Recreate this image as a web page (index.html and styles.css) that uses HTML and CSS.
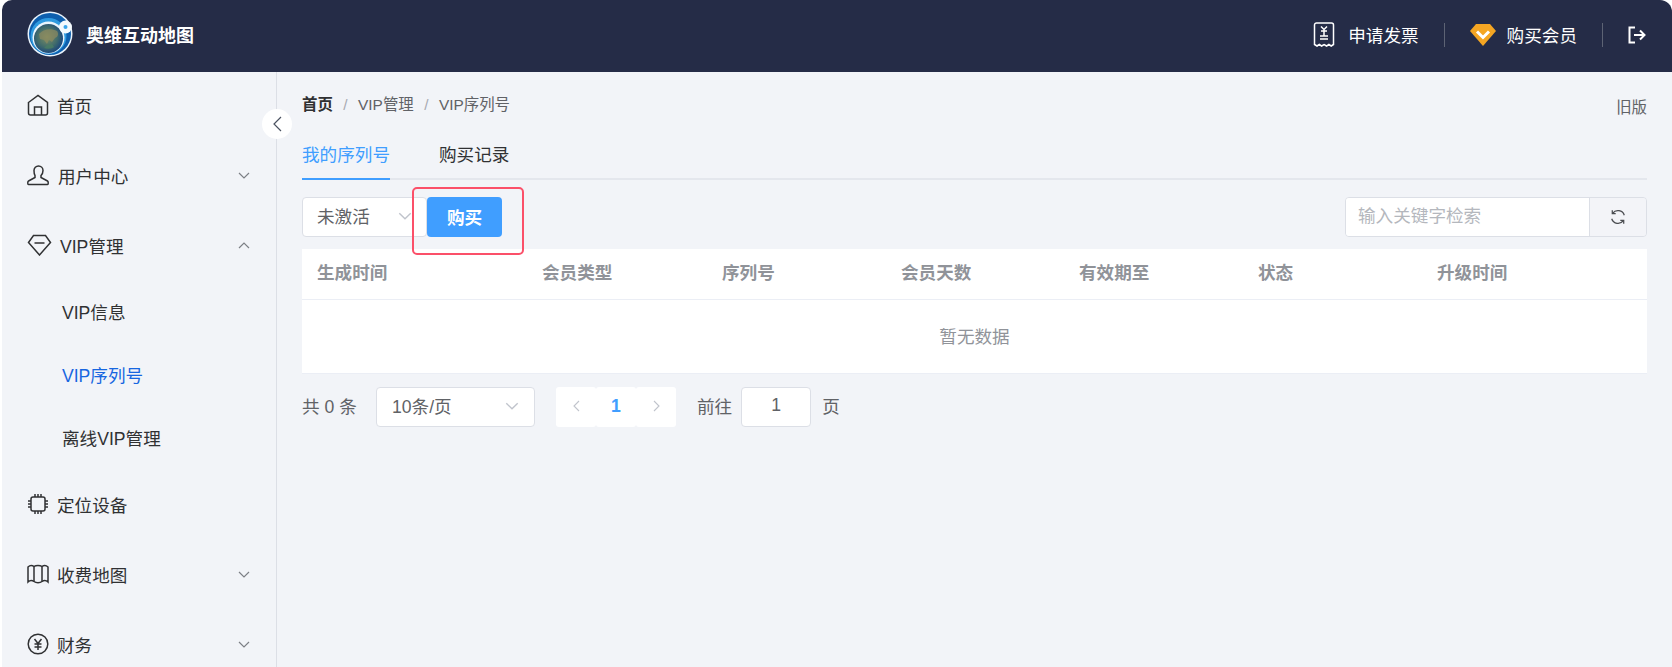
FILE: index.html
```html
<!DOCTYPE html>
<html lang="zh-CN">
<head>
    <meta charset="UTF-8">
    <title>奥维互动地图</title>
    <link rel="stylesheet" href="styles.css">
</head>
<body>
    <header class="topbar">
        <div class="brand">
            <svg class="logo" viewBox="0 0 46 46">
                <defs>
                    <radialGradient id="earth" cx="45%" cy="45%" r="60%">
                        <stop offset="0" stop-color="#7d8f62"/>
                        <stop offset="0.6" stop-color="#3f6a6c"/>
                        <stop offset="1" stop-color="#15407e"/>
                    </radialGradient>
                </defs>
                <circle cx="23" cy="23" r="22.500" fill="#e9f3fb"/>
                <circle cx="23" cy="23" r="21" fill="#0d5fae"/>
                <circle cx="21.500" cy="25" r="18" fill="#2f9be0"/>
                <circle cx="21.500" cy="26.500" r="16" fill="#eaf5fc"/>
                <circle cx="21.500" cy="27.500" r="14.500" fill="url(#earth)"/>
                <path d="M12 23c4-5 12-6 18-3 2 3 1 6-2 7l-3 4-3-2-2 4-3-4-4-1z" fill="#8f8a60" opacity="0.7"/>
                <path d="M17 37c3 1 8 1 10-1l-2-3-5 1z" fill="#4a7d64" opacity="0.8"/>
                <circle cx="38.500" cy="16" r="6.500" fill="#f4fafe"/>
                <circle cx="38.500" cy="16" r="2" fill="#3aa6ec"/>
            </svg>
            <span class="brand-name">奥维互动地图</span>
        </div>
        <div class="top-actions">
            <a class="top-link">
                <svg class="ic-receipt" viewBox="0 0 22 25" fill="none" stroke="#fff" stroke-width="1.500">
                    <path d="M1.500 3a2 2 0 0 1 2-2h15a2 2 0 0 1 2 2v19.500l-2.300 1.500-2.300-1.500-2.300 1.500-2.500-1.500-2.500 1.500-2.300-1.500-2.300 1.500-2.500-1.500z"/>
                    <path d="M8 4.500l3 3 3-3M11 7.500v6M8 9h6M7 14h8M7 17h8"/>
                </svg>
                <span>申请发票</span>
            </a>
            <i class="top-sep"></i>
            <a class="top-link">
                <svg class="ic-diamond" viewBox="0 0 26 22">
                    <path d="M6 0h14l6 7-13 15L0 7z" fill="#f5a623"/>
                    <path d="M7 7.500l6 6 6-6" fill="none" stroke="#fff" stroke-width="3"/>
                </svg>
                <span>购买会员</span>
            </a>
            <i class="top-sep"></i>
            <svg class="ic-logout" viewBox="0 0 18 18" fill="none" stroke="#fff" stroke-width="2">
                <path d="M7 1.500H1.500v15H7M6 9h10.500M12 4.500L16.500 9 12 13.500"/>
            </svg>
        </div>
    </header>

    <div class="layout">
        <aside class="sidebar">
            <a class="menu-item">
                <svg class="menu-ic" viewBox="0 0 22 22" fill="none" stroke="#303133" stroke-width="1.500">
                    <path d="M1.500 8.500L11 1.500l9.500 7v10.500a2 2 0 0 1-2 2h-15a2 2 0 0 1-2-2z"/>
                    <path d="M7.500 21v-8h7v8"/>
                </svg>
                <span>首页</span>
            </a>
            <a class="menu-item">
                <svg class="menu-ic menu-ic-user" viewBox="0 0 22 22" fill="none" stroke="#303133" stroke-width="1.500">
                    <path d="M7 6.500a4.500 4.500 0 0 1 9 0c0 2.500-1 4-2 5v2l6.500 3.500c1 .6 1 3.500 0 3.500H1.500c-1 0-1-3 0-3.500L8 13.500v-2c-.8-1-1-2.500-1-5z" transform="translate(-.500)"/>
                </svg>
                <span>用户中心</span>
                <svg class="chev" viewBox="0 0 12 7"><path d="M1 1l5 5 5-5"/></svg>
            </a>
            <a class="menu-item">
                <svg class="menu-ic menu-ic-vip" viewBox="0 0 24 22" fill="none" stroke="#303133" stroke-width="1.500">
                    <path d="M6 1.500h12l5 7-11 12.500L1 8.500z"/>
                    <path d="M7 9h10"/>
                </svg>
                <span>VIP管理</span>
                <svg class="chev" viewBox="0 0 12 7"><path d="M1 6l5-5 5 5"/></svg>
            </a>
            <a class="sub-item">VIP信息</a>
            <a class="sub-item sub-active">VIP序列号</a>
            <a class="sub-item">离线VIP管理</a>
            <a class="menu-item">
                <svg class="menu-ic" viewBox="0 0 22 22" fill="none" stroke="#303133" stroke-width="1.500">
                    <rect x="4" y="4" width="14" height="14" rx="2"/>
                    <path d="M8 1v3M11 1v3M14 1v3M8 18v3M11 18v3M14 18v3M1 8h3M1 11h3M1 14h3M18 8h3M18 11h3M18 14h3"/>
                </svg>
                <span>定位设备</span>
            </a>
            <a class="menu-item">
                <svg class="menu-ic" viewBox="0 0 22 22" fill="none" stroke="#303133" stroke-width="1.500">
                    <path d="M1 4c2-2 4-2 6-.500 2-1.500 6-1.500 8 0 2-1.500 4-1.500 6 .500v15c-2-2-4-2-6-.500-2 1.500-6 1.500-8 0-2-1.500-4-1.500-6 .500z"/>
                    <path d="M7 3.500v15M15 3.500v15"/>
                </svg>
                <span>收费地图</span>
                <svg class="chev" viewBox="0 0 12 7"><path d="M1 1l5 5 5-5"/></svg>
            </a>
            <a class="menu-item">
                <svg class="menu-ic" viewBox="0 0 22 22" fill="none" stroke="#303133" stroke-width="1.500">
                    <circle cx="11" cy="11" r="9.800"/>
                    <path d="M7.500 6l3.500 4.500L14.500 6M11 10.500V17M7.500 11h7M7.500 14h7"/>
                </svg>
                <span>财务</span>
                <svg class="chev" viewBox="0 0 12 7"><path d="M1 1l5 5 5-5"/></svg>
            </a>
            <button class="collapse-btn">
                <svg viewBox="0 0 9 16"><path d="M8 1L1 8l7 7"/></svg>
            </button>
        </aside>

        <main class="content">
            <div class="crumb-row">
                <div class="crumbs">
                    <b>首页</b><i>/</i><span>VIP管理</span><i>/</i><span>VIP序列号</span>
                </div>
                <a class="old-ver">旧版</a>
            </div>

            <div class="tabs">
                <a class="tab tab-active">我的序列号</a>
                <a class="tab">购买记录</a>
            </div>

            <div class="toolbar">
                <div class="select status-select">
                    <span>未激活</span>
                    <svg class="chev chev-light" viewBox="0 0 12 7"><path d="M1 1l5 5 5-5"/></svg>
                </div>
                <button class="buy-btn">购买</button>
                <div class="mark-box"></div>
                <div class="search">
                    <div class="search-input">输入关键字检索</div>
                    <button class="search-refresh">
                        <svg viewBox="0 0 14 14" fill="none" stroke="#4a4c50" stroke-width="1.100">
                            <path d="M12.500 5.500A5.800 5.800 0 0 0 2.300 3.800M1.500 8.500a5.800 5.800 0 0 0 10.200 1.700"/>
                            <path d="M2 1v3h3M12 13v-3H9"/>
                        </svg>
                    </button>
                </div>
            </div>

            <div class="table">
                <div class="table-head">
                    <div>生成时间</div>
                    <div>会员类型</div>
                    <div>序列号</div>
                    <div>会员天数</div>
                    <div>有效期至</div>
                    <div>状态</div>
                    <div>升级时间</div>
                </div>
                <div class="table-empty">暂无数据</div>
            </div>

            <div class="pager">
                <span class="pager-total">共 0 条</span>
                <div class="select size-select">
                    <span>10条/页</span>
                    <svg class="chev chev-light" viewBox="0 0 12 7"><path d="M1 1l5 5 5-5"/></svg>
                </div>
                <div class="pager-nums">
                    <button class="pager-btn"><svg viewBox="0 0 7 12"><path d="M6 1L1 6l5 5"/></svg></button>
                    <button class="pager-btn pager-cur">1</button>
                    <button class="pager-btn"><svg viewBox="0 0 7 12"><path d="M1 1l5 5-5 5"/></svg></button>
                </div>
                <span class="pager-goto">前往</span>
                <div class="pager-input">1</div>
                <span class="pager-unit">页</span>
            </div>
        </main>
    </div>
</body>
</html>
```

FILE: styles.css
```css
* {
    margin: 0;
    padding: 0;
    box-sizing: border-box;
}
html, body {
    height: 667px;
    overflow: hidden;
}
body {
    font-family: "Liberation Sans", "Noto Sans CJK SC", sans-serif;
    font-size: 17.6px;
    color: #303133;
    background: #fff;
    padding-left: 2px;
}
button {
    font-family: inherit;
    border: none;
}
.topbar {
    height: 72px;
    background: #252c47;
    border-radius: 10px 12px 0 0;
    display: flex;
    justify-content: space-between;
    align-items: center;
    color: #fff;
}
.brand {
    display: flex;
    align-items: center;
    margin-left: 25px;
    margin-top: -4px;
}
.logo {
    width: 46px;
    height: 46px;
}
.brand-name {
    margin-left: 13px;
    font-size: 18px;
    font-weight: 700;
}
.top-actions {
    display: flex;
    align-items: center;
    padding-right: 26px;
    margin-top: -3px;
}
.top-link {
    display: flex;
    align-items: center;
}
.ic-receipt {
    width: 22px;
    height: 25px;
    margin-right: 13px;
}
.ic-diamond {
    width: 26px;
    height: 22px;
    margin-right: 11px;
}
.ic-logout {
    width: 18px;
    height: 18px;
}
.top-sep {
    width: 1px;
    height: 24px;
    background: #5d6374;
    margin: 0 25px;
}
.layout {
    display: flex;
    height: 595px;
    background: #f2f4f8;
}
.sidebar {
    position: relative;
    width: 275px;
    flex: none;
    border-right: 1px solid #dcdfe6;
    padding-left: 25px;
}
.menu-item {
    display: flex;
    align-items: center;
    height: 70px;
    padding-right: 26px;
    padding-bottom: 4px;
    color: #303133;
}
.menu-ic {
    width: 22px;
    height: 22px;
    margin-right: 8px;
    flex: none;
}
.menu-ic-user {
    width: 23px;
}
.menu-ic-vip {
    width: 25px;
}
.chev {
    width: 12px;
    height: 7px;
    margin-left: auto;
    fill: none;
    stroke: #7d8086;
    stroke-width: 1.200;
}
.chev-light {
    stroke: #c0c4cc;
    width: 14px;
    height: 8px;
}
.sub-item {
    display: flex;
    align-items: center;
    height: 63px;
    padding-left: 35px;
    padding-bottom: 4px;
    color: #303133;
}
.sub-active {
    color: #1766e0;
}
.collapse-btn {
    position: absolute;
    top: 37px;
    right: -16px;
    width: 30px;
    height: 30px;
    border-radius: 50%;
    background: #fff;
    display: flex;
    align-items: center;
    justify-content: center;
}
.collapse-btn svg {
    width: 9px;
    height: 16px;
    fill: none;
    stroke: #4a5260;
    stroke-width: 1.200;
}
.content {
    flex: 1;
    padding: 0 25px;
    min-width: 0;
}
.crumb-row {
    display: flex;
    justify-content: space-between;
    align-items: center;
    height: 22px;
    margin-top: 20px;
}
.crumbs {
    font-size: 15.4px;
    color: #606266;
}
.crumbs b {
    color: #303133;
}
.crumbs i {
    font-style: normal;
    color: #a8abb2;
    margin: 0 10.500px;
}
.old-ver {
    font-size: 15.4px;
    color: #606266;
    margin-top: 6px;
}
.tabs {
    display: flex;
    gap: 49px;
    height: 42px;
    margin-top: 24px;
    border-bottom: 2px solid #e4e7ed;
}
.tab {
    height: 42px;
    line-height: 34px;
    color: #303133;
}
.tab-active {
    color: #409eff;
    border-bottom: 2px solid #409eff;
}
.toolbar {
    position: relative;
    display: flex;
    height: 40px;
    margin-top: 17px;
}
.select {
    display: flex;
    align-items: center;
    height: 40px;
    background: #fff;
    border: 1px solid #dcdfe6;
    border-radius: 4px;
    color: #606266;
}
.status-select {
    width: 125px;
    padding: 0 14px 3px;
}
.buy-btn {
    width: 75px;
    height: 40px;
    padding-bottom: 2px;
    background: #409eff;
    color: #fff;
    font-size: 17.6px;
    font-weight: 700;
    border-radius: 4px;
}
.mark-box {
    position: absolute;
    left: 110px;
    top: -10px;
    width: 112px;
    height: 68px;
    border: 2.500px solid #fb5069;
    border-radius: 5px;
}
.search {
    display: flex;
    width: 302px;
    height: 40px;
    margin-left: auto;
    border: 1px solid #dcdfe6;
    border-radius: 4px;
    overflow: hidden;
}
.search-input {
    flex: 1;
    background: #fff;
    color: #b4b7bd;
    font-size: 17.6px;
    line-height: 36px;
    padding-left: 12px;
}
.search-refresh {
    width: 57px;
    background: #f3f4f8;
    border-left: 1px solid #dcdfe6;
    display: flex;
    align-items: center;
    justify-content: center;
}
.search-refresh svg {
    width: 16px;
    height: 16px;
}
.table {
    margin-top: 12px;
    background: #fff;
    border-bottom: 1px solid #ebeef5;
}
.table-head {
    display: grid;
    grid-template-columns: 225px 180px 179px 178px 179px 179px 1fr;
    height: 51px;
    line-height: 48px;
    border-bottom: 1px solid #ebeef5;
    color: #909399;
    font-weight: 700;
}
.table-head div {
    padding-left: 15px;
}
.table-empty {
    height: 73px;
    line-height: 74px;
    text-align: center;
    color: #909399;
}
.pager {
    display: flex;
    align-items: center;
    height: 40px;
    margin-top: 13px;
    color: #606266;
}
.pager-total {
    width: 74px;
    margin-bottom: 3px;
}
.size-select {
    width: 159px;
    padding: 0 15px 3px;
}
.pager-nums {
    display: flex;
    margin-left: 21px;
}
.pager-btn {
    width: 40px;
    height: 40px;
    padding-bottom: 2px;
    background: #fff;
    border-radius: 3px;
    display: flex;
    align-items: center;
    justify-content: center;
    font-size: 17.6px;
}
.pager-btn svg {
    width: 7px;
    height: 12px;
    fill: none;
    stroke: #c0c4cc;
    stroke-width: 1.100;
}
.pager-cur {
    color: #409eff;
    font-weight: 700;
}
.pager-goto {
    margin-left: 21px;
    margin-bottom: 3px;
}
.pager-input {
    width: 70px;
    height: 40px;
    line-height: 35px;
    margin-left: 9px;
    text-align: center;
    background: #fff;
    border: 1px solid #dcdfe6;
    border-radius: 4px;
}
.pager-unit {
    margin-left: 11px;
    margin-bottom: 3px;
}
```
